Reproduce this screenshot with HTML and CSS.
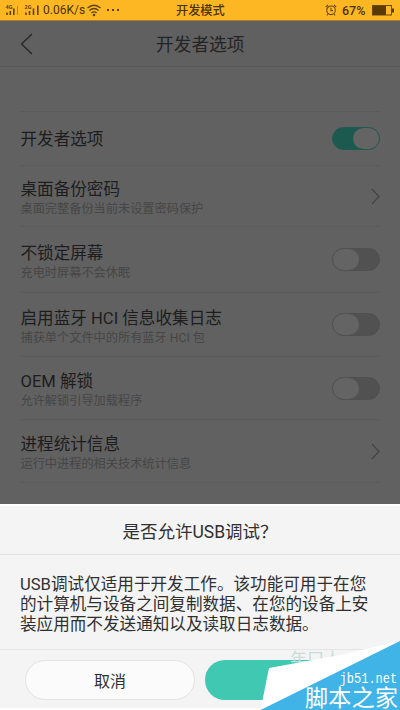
FILE: index.html
```html
<!DOCTYPE html>
<html lang="zh-CN">
<head>
<meta charset="utf-8">
<title>开发者选项</title>
<link rel="stylesheet" href="styles.css">
</head>
<body>
<div class="phone">
  <div class="status">
    <svg class="signals" width="40" height="20" viewBox="0 0 40 20">
      <g class="tiny"><text x="5.5" y="8.5">4G</text><text x="24.5" y="8.5">2G</text></g>
      <g class="bars"><path d="M7 12.5v2.5M10.3 11v4M13.8 8.5v6.5"/><path class="faint" d="M17.5 6v9"/><path d="M26 12.5v2.5M29.5 11v4M33.5 8.5v6.5M37.8 5.5v9.5"/></g>
    </svg>
    <span class="speed">0.06K/s</span>
    <svg class="wifi" width="16" height="14" viewBox="0 0 16 14"><path d="M1.5 5Q8 -.5 14.5 5M3.4 7.5Q8 3.5 12.6 7.5M5.4 10Q8 7.8 10.6 10"/><circle cx="8" cy="12" r="1.3"/></svg>
    <span class="dots"><i></i><i></i><i></i></span>
    <span class="mode">开发模式</span>
    <svg class="alarm" width="12" height="12" viewBox="0 0 12 12"><circle cx="6" cy="6.3" r="4.3"/><path d="M.8 3L3 1M11.2 3L9 1M6 3.8v2.8h2M3 10l-1 1.3M9 10l1 1.3"/></svg>
    <span class="percent">67%</span>
    <svg class="battery" width="22" height="11" viewBox="0 0 22 11"><rect x=".5" y=".5" width="19" height="9.5"/><path d="M1 1h13v9H1zM20 3.5h2v4h-2z"/></svg>
  </div>
  <header class="header">
    <svg class="back" width="13" height="22" viewBox="0 0 13 22"><path d="M12 1L1.5 11L12 21"/></svg>
    <h1>开发者选项</h1>
  </header>
  <main class="settings">
    <div class="spacer"></div>
    <div class="row first"><div class="title">开发者选项</div><span class="switch on"></span></div>
    <div class="row r2"><div class="label"><div class="title">桌面备份密码</div><div class="sub">桌面完整备份当前未设置密码保护</div></div><svg class="arrow" width="9" height="17" viewBox="0 0 9 17"><path d="M1 1l7 7.5L1 16"/></svg></div>
    <div class="row r3"><div class="label"><div class="title">不锁定屏幕</div><div class="sub">充电时屏幕不会休眠</div></div><span class="switch"></span></div>
    <div class="row"><div class="label"><div class="title">启用蓝牙 HCI 信息收集日志</div><div class="sub">捕获单个文件中的所有蓝牙 HCI 包</div></div><span class="switch"></span></div>
    <div class="row r5"><div class="label"><div class="title">OEM 解锁</div><div class="sub">允许解锁引导加载程序</div></div><span class="switch"></span></div>
    <div class="row"><div class="label"><div class="title">进程统计信息</div><div class="sub">运行中进程的相关技术统计信息</div></div><svg class="arrow" width="9" height="17" viewBox="0 0 9 17"><path d="M1 1l7 7.5L1 16"/></svg></div>
  </main>
  <section class="dialog">
    <h2>是否允许USB调试？</h2>
    <p>USB调试仅适用于开发工作。该功能可用于在您<br>的计算机与设备之间复制数据、在您的设备上安<br>装应用而不发送通知以及读取日志数据。</p>
    <div class="actions"><button class="cancel">取消</button><button class="confirm" aria-label="确定"></button></div>
  </section>
  <svg class="watermark" width="144" height="76" viewBox="256 634 144 76">
    <text class="ghost" x="290" y="665">年口人</text>
    <path class="corner" d="M269 668L340 655L400 641V710H260.5z"/>
    <path class="blue" d="M260.5 710L400 641V710z"/>
    <text class="url" transform="translate(339.5 682.5) scale(.86 1)">jb51.net</text>
    <text class="site" x="305" y="705.5" textLength="93">脚本之家</text>
  </svg>
</div>
</body>
</html>
```
FILE: styles.css
```css
* { box-sizing: border-box; }
body { margin: 0; font-family: Roboto, "Noto Sans CJK SC", sans-serif; }
.phone { position: relative; width: 400px; height: 710px; overflow: hidden; background: #616161; }

.status { height: 21px; background: #fdb722; border-bottom: 1px solid #a47d2c; display: flex; align-items: center; color: #4c3208; font-size: 12px; white-space: nowrap; }
.signals { flex: none; }
.tiny { font-size: 5.5px; font-weight: 700; fill: #5e400b; }
.bars { stroke: #5e400b; stroke-width: 1.6; }
.faint { stroke: #b98518; stroke-width: 1; }
.speed { width: 46px; margin-left: 3px; font-size: 12px; }
.wifi { margin-left: -3px; fill: #5e400b; }
.wifi path { fill: none; stroke: #5e400b; stroke-width: 1.3; }
.dots { display: flex; gap: 3px; margin-left: 5px; }
.dots i { width: 2px; height: 2px; background: #5e400b; }
.mode { margin-left: 57px; width: 49px; font-size: 12.2px; font-weight: 500; }
.alarm { margin-left: 100px; fill: none; stroke: #6b490d; stroke-width: 1.1; }
.percent { width: 25px; margin-left: 5px; font-size: 12.5px; font-weight: 500; }
.battery { margin-left: 5px; fill: #5a3b05; }
.battery rect { fill: none; stroke: #6b490d; }

.header { height: 46px; background: #606060; border-bottom: 1px solid #585858; display: flex; align-items: center; }
.back { margin-left: 20px; fill: none; stroke: #262626; stroke-width: 1.3; }
h1 { margin: 0 0 0 123px; padding-top: 2px; font-size: 17.7px; font-weight: 400; line-height: 24px; color: #242424; }

.settings { padding: 0 20px; }
.spacer { height: 44px; }
.row { height: 64px; border-top: 1px solid #5b5b5b; padding-left: .5px; display: flex; align-items: center; justify-content: space-between; }
.row:last-child { border-bottom: 1px solid #5b5b5b; }
.first { height: 54px; }
.first .title { padding-top: 3px; }
.r2 { height: 61px; }
.r3 { height: 66px; }
.r5 { height: 63px; }
.label { padding-top: 6px; }
.title { font-size: 16.6px; line-height: 20px; color: #1d1d1d; }
.sub { font-size: 12.2px; line-height: 18px; color: #464646; }
.switch { width: 48px; height: 23px; border-radius: 12px; background: #515151; border: 1.5px solid #505050; display: flex; }
.switch::after { content: ""; width: 26px; border-radius: 11px; background: #646464; }
.on { background: #1c5a50; border-color: #1f5a51; justify-content: flex-end; }
.arrow { fill: none; stroke: #444; stroke-width: 1.2; }

.dialog { position: absolute; left: 0; top: 504px; width: 400px; height: 206px; background: #f4f4f4; border-top: 2px solid #fff; border-bottom: 2px solid #fff; }
h2 { margin: 0; height: 49px; padding-top: 3px; text-align: center; font-size: 17.5px; font-weight: 400; line-height: 46px; color: #303030; border-bottom: 1px solid #e2e2e2; }
.dialog p { margin: 0; height: 95px; padding: 20px 0 0 20px; font-size: 16.6px; line-height: 19.8px; color: #303030; white-space: nowrap; border-bottom: 1px solid #e5e5e5; }
.actions { display: flex; gap: 10px; padding: 10px 25px 0; }
button { width: 170px; height: 40px; border-radius: 20px; padding: 0; font: 16px Roboto, "Noto Sans CJK SC", sans-serif; color: #303030; }
.cancel { background: #fbfbfb; border: 1px solid #e3e3e3; }
.confirm { background: #40c8b3; border: 0; }

.watermark { position: absolute; right: 0; bottom: 0; font-family: "Noto Sans CJK SC", sans-serif; }
.ghost { font-size: 17px; fill: #c8dcda; }
.corner { fill: #fff; }
.blue { fill: #40b3e7; }
.url { font: 14px "Liberation Mono", monospace; fill: #fff; }
.site { font-size: 23px; fill: #fff; }
```
